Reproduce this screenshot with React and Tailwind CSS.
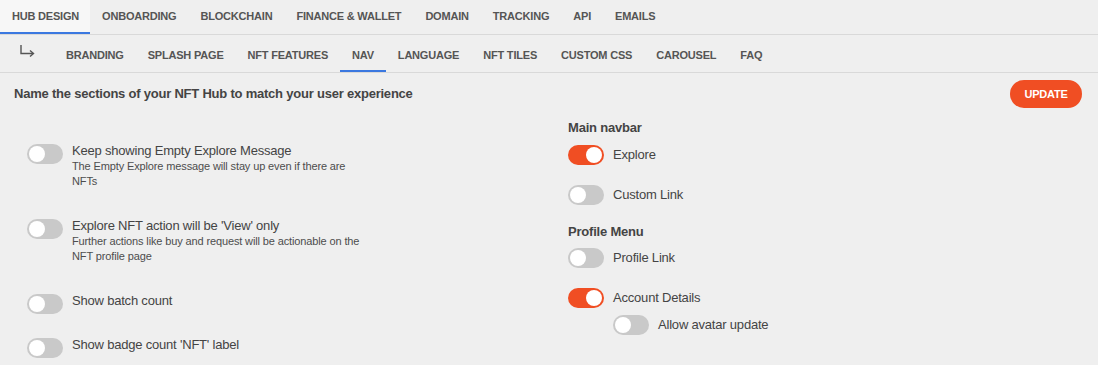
import React from "react";

const topTabs = ["HUB DESIGN", "ONBOARDING", "BLOCKCHAIN", "FINANCE & WALLET", "DOMAIN", "TRACKING", "API", "EMAILS"];
const subTabs = ["BRANDING", "SPLASH PAGE", "NFT FEATURES", "NAV", "LANGUAGE", "NFT TILES", "CUSTOM CSS", "CAROUSEL", "FAQ"];

function Toggle({ on }) {
  return (
    <span
      className={
        on
          ? "relative inline-block w-[36px] h-[20px] rounded-full shrink-0 bg-[#f04e23]"
          : "relative inline-block w-[36px] h-[20px] rounded-full shrink-0 bg-[#c9c9c9]"
      }
    >
      <span
        className={
          on
            ? "absolute top-[2px] left-[18px] w-[16px] h-[16px] rounded-full bg-white"
            : "absolute top-[2px] left-[2px] w-[16px] h-[16px] rounded-full bg-white"
        }
      />
    </span>
  );
}

function LeftRow({ title, desc, className }) {
  return (
    <div className={"flex items-start gap-[9px] " + className}>
      <div className="mt-[1px]">
        <Toggle on={false} />
      </div>
      <div className="w-[296px]">
        <div className="text-[13px] leading-[16px] tracking-[-0.2px] text-[#444]">{title}</div>
        {desc && (
          <div className="text-[11px] leading-[15px] tracking-[-0.13px] text-[#4d4d4d]">{desc}</div>
        )}
      </div>
    </div>
  );
}

function RightRow({ label, on, className }) {
  return (
    <div className={"flex items-center gap-[9px] " + className}>
      <Toggle on={on} />
      <span className="text-[13px] leading-[16px] tracking-[-0.2px] text-[#444]">{label}</span>
    </div>
  );
}

export default function App() {
  return (
    <div className="w-[1098px] h-[365px] overflow-hidden bg-[#efefef] font-['Liberation_Sans',Arial,sans-serif]">
      {/* top tabs */}
      <div className="flex h-[35px] border-b border-[#d9d9d9]">
        {topTabs.map((t, i) => (
          <div
            key={t}
            className={
              i === 0
                ? "flex items-center h-[34px] pl-[12px] pr-[11px] text-[11px] tracking-[-0.2px] font-bold text-[#555] bg-[#f7f7f7] border-b-2 border-[#3b78e0]"
                : "flex items-center h-[34px] px-[12px] text-[11px] tracking-[-0.2px] font-bold text-[#555] border-b-2 border-transparent"
            }
          >
            {t}
          </div>
        ))}
      </div>
      {/* sub tabs */}
      <div className="flex h-[38px] border-b border-[#d9d9d9]">
        <div className="w-[54px] flex items-start pt-[10px] pl-[20px]">
          <svg width="16" height="13" viewBox="0 0 16 13" fill="none" stroke="#555" strokeWidth="1.4">
            <path d="M1 0 V8.5 H13" />
            <path d="M10 5.5 L13.5 8.5 L10 11.5" />
          </svg>
        </div>
        {subTabs.map((t) => (
          <div
            key={t}
            className={
              t === "NAV"
                ? "flex items-center h-[37px] pt-[5px] px-[12px] text-[11px] tracking-[-0.2px] font-bold text-[#555] border-b-2 border-[#3b78e0]"
                : "flex items-center h-[37px] pt-[5px] px-[12px] text-[11px] tracking-[-0.2px] font-bold text-[#555] border-b-2 border-transparent"
            }
          >
            {t}
          </div>
        ))}
      </div>
      {/* header row */}
      <div className="flex items-center justify-between pl-[14px] pr-[16px] pt-[7px]">
        <div className="text-[13px] font-bold tracking-[-0.22px] text-[#444]">
          Name the sections of your NFT Hub to match your user experience
        </div>
        <button className="h-[28px] w-[72px] rounded-full bg-[#f04e23] text-white text-[11px] tracking-[-0.2px] font-bold">
          UPDATE
        </button>
      </div>
      {/* columns */}
      <div className="flex">
        <div className="w-[568px] pl-[27px] flex flex-col">
          <LeftRow
            className="mt-[35px]"
            title="Keep showing Empty Explore Message"
            desc="The Empty Explore message will stay up even if there are NFTs"
          />
          <LeftRow
            className="mt-[29px]"
            title="Explore NFT action will be 'View' only"
            desc="Further actions like buy and request will be actionable on the NFT profile page"
          />
          <LeftRow className="mt-[29px]" title="Show batch count" />
          <LeftRow className="mt-[16px]" title="Show badge count 'NFT' label" />
        </div>
        <div className="flex flex-col">
          <div className="mt-[12px] text-[13px] leading-[16px] tracking-[-0.2px] font-bold text-[#444]">Main navbar</div>
          <RightRow className="mt-[9px]" label="Explore" on={true} />
          <RightRow className="mt-[20px]" label="Custom Link" on={false} />
          <div className="mt-[19px] text-[13px] leading-[16px] tracking-[-0.2px] font-bold text-[#444]">Profile Menu</div>
          <RightRow className="mt-[8px]" label="Profile Link" on={false} />
          <RightRow className="mt-[20px]" label="Account Details" on={true} />
          <RightRow className="mt-[7px] ml-[45px]" label="Allow avatar update" on={false} />
        </div>
      </div>
    </div>
  );
}
